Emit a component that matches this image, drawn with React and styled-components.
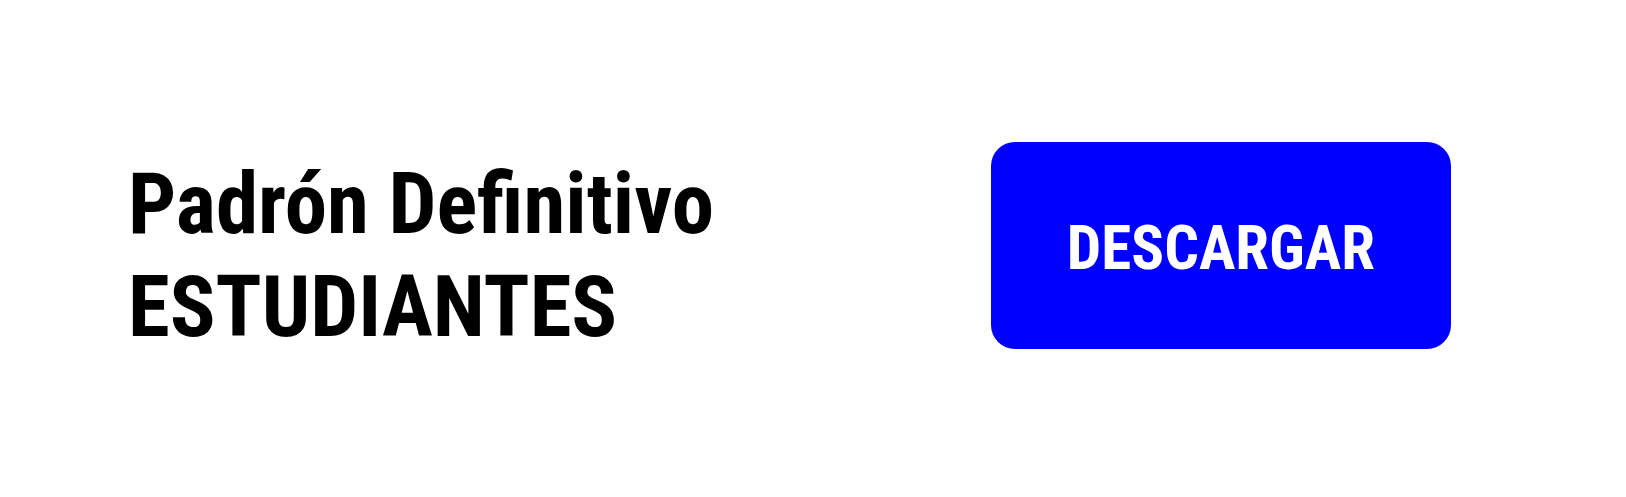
import styled, { createGlobalStyle } from 'styled-components';

export default function App() {
  return (
    <>
      <GlobalStyle />
      <Banner>
        <Title>
          Padrón Definitivo
          <br />
          ESTUDIANTES
        </Title>
        <Action>
          <DownloadButton type="button">DESCARGAR</DownloadButton>
        </Action>
      </Banner>
    </>
  );
}

const GlobalStyle = createGlobalStyle`
  body {
    margin: 0;
    background: #fff;
    font-family: 'Roboto Condensed', Roboto, sans-serif;
  }
`;

const Banner = styled.main`
  display: grid;
  grid-template-columns: 1fr 1fr;
  align-items: center;
  min-height: 100vh;
  padding: 0 128px 6px;
  box-sizing: border-box;
`;

const Title = styled.h1`
  margin: 0;
  padding-top: 20px;
  color: #000;
  font-size: 85px;
  font-weight: 700;
  line-height: 103px;
  white-space: nowrap;
`;

const Action = styled.div`
  display: flex;
  justify-content: flex-end;
  padding-right: 47px;
`;

const DownloadButton = styled.button`
  padding: 69px 76px 64px;
  border: 0;
  border-radius: 24px;
  background: #0000ff;
  color: #fff;
  font-family: inherit;
  font-size: 61px;
  font-weight: 700;
  line-height: 74px;
  cursor: pointer;
`;
